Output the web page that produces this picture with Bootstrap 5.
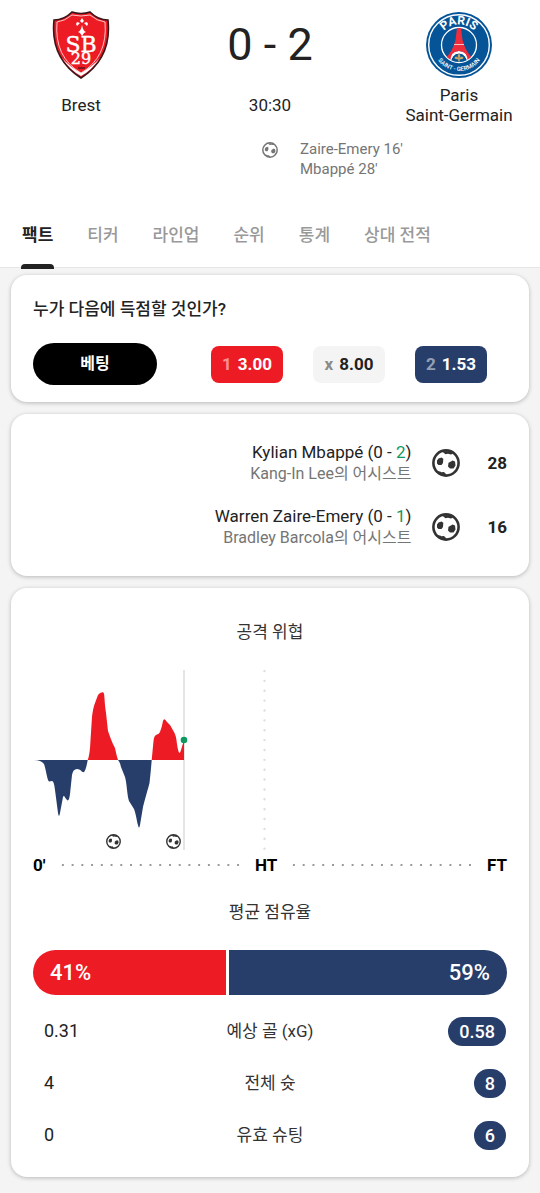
<!DOCTYPE html>
<html lang="ko">
<head>
<meta charset="utf-8">
<meta name="viewport" content="width=device-width, initial-scale=1">
<title>Brest 0 - 2 Paris Saint-Germain</title>
<link href="https://cdn.jsdelivr.net/npm/bootstrap@5.3.0/dist/css/bootstrap.min.css" rel="stylesheet">
<style>
  :root { --home: #ed1c24; --away: #273e6b; --ink: #222; --muted: #757575; --goal: #0f9960; }
  body { background: #f4f4f4; color: var(--ink); font-family: Roboto, "Noto Sans CJK KR", sans-serif; font-size: 17px; line-height: 20px; }
  .match-head { border-bottom: 1px solid #e6e6e6; padding-top: 11px; }
  .side { width: 30%; }
  .crest { height: 68px; }
  .team-name { height: 40px; margin-top: 6px; }
  .score { font-size: 45px; }
  .scorers { font-size: 15px; color: var(--muted); padding-top: 14px; }
  .scorer-icon { width: 16px; height: 20px; margin-right: -8px; }
  .scorer-names { padding-left: 30px; }
  .tabs { padding: 39px 22px 0; gap: 34px; }
  .tabs .nav-link { padding: 5px 0 0; height: 49px; line-height: 24px; color: #999; font-weight: 500; position: relative; }
  .tabs .nav-link.active { color: var(--ink); font-weight: 700; }
  .tabs .nav-link.active::after { content: ""; position: absolute; left: -1px; right: -1px; bottom: -2px; height: 5px; background: var(--ink); border-radius: 4px 4px 0 0; }
  .panels { padding: 7px 11px 16px; gap: 12px; }
  .panel { border: 0; border-radius: 16px; box-shadow: 0 1px 4px rgba(0,0,0,.25); padding: 22px 22px 17px; }
  .question { font-weight: 500; line-height: 24px; margin-bottom: 22px; }
  .bet { background: #000; color: #fff; font-size: 16px; font-weight: 700; width: 124px; height: 42px; padding: 0; --bs-btn-hover-bg: #222; --bs-btn-hover-color: #fff; }
  .odds { gap: 30px; padding-right: 20px; }
  .odd { width: 72px; height: 37px; padding: 0; border: 0; border-radius: 8px; font-weight: 700; color: #fff; gap: 6px; }
  .odd span { opacity: .5; }
  .home-fill { background: var(--home); }
  .draw-fill { background: #f4f4f4; color: var(--ink); }
  .away-fill { background: var(--away); }
  .events { padding: 27px 22px; gap: 20px; }
  .event-text { line-height: 22px; }
  .event-text em { color: var(--goal); font-style: normal; }
  .assist { color: var(--muted); font-size: 16px; }
  .event-icon { margin: 0 27px 0 21px; color: #333; }
  .minute { font-weight: 700; }
  .stats-panel { padding: 32px 22px 16px; }
  .heading { font-size: 17px; font-weight: 400; line-height: 24px; margin: 0; color: #333; }
  .chart { margin-top: 26px; color: #333; }
  .axis { color: #000; font-weight: 700; margin-top: 5px; gap: 12px; margin-bottom: 25px; }
  .dots { height: 4px; background: radial-gradient(circle, #999 1px, transparent 1px) 0 0 / 10px 4px; background-repeat: round no-repeat; }
  .bar { height: 45px; gap: 3px; margin-top: 26px; color: #fff; font-size: 22px; font-weight: 500; }
  .bar div { padding: 0 17px; }
  .stats { margin-top: 10px; width: 100%; font-size: 18px; table-layout: fixed; }
  .stats th { font-size: 17px; font-weight: 400; color: #333; text-align: center; height: 52px; }
  .stats td:first-child { padding-left: 11px; }
  .stats td:last-child { text-align: right; }
  .best { display: inline-block; background: var(--away); color: #fff; border-radius: 15px; padding: 0 11px; line-height: 29px; font-weight: 500; }
</style>
<script src="https://cdn.jsdelivr.net/npm/bootstrap@5.3.0/dist/js/bootstrap.bundle.min.js"></script>
</head>
<body>
<svg width="0" height="0" class="position-absolute" aria-hidden="true">
  <symbol id="ball" viewBox="0 0 28 28">
    <circle cx="14" cy="14" r="12.600" fill="none" stroke="currentColor" stroke-width="2.600"/>
    <path fill="currentColor" d="M9.500 2L20 2.500 21.500 4.500 19 5.400 16 4.800 13.500 5.200zM6.500 9.500L9.500 8.500 11.300 9.800 11 14 9.500 16 6.500 16 5 14.500 5 11.500zM18.500 12.800L20.500 11.500 23 12.500 23.500 16.500 21.500 19.500 18 19.500 16 17.500 16.500 13.800zM5 22L8 22.500 9.500 23.300 12 23 14.500 25.500 13 26.500 8 25.500z"/>
  </symbol>
</svg>

<header class="match-head bg-white">
  <div class="d-flex text-center">
    <div class="side">
      <svg class="crest" width="58" height="68" viewBox="0 0 58 68" role="img" aria-label="Brest">
        <path d="M20 1Q29 4 38 1Q46 9 56 9Q60 47 29 67Q-2 47 2 9Q12 9 20 1z" fill="#ed1c24" stroke="#3b1519" stroke-width="1.600"/>
        <path d="M20 4Q29 6 38 4Q45 10 53 11Q56 46 29 62Q2 46 5 11Q13 10 20 4z" fill="none" stroke="#fff" stroke-opacity=".75"/>
        <path d="M10 47Q18 56 29 62Q40 56 48 47Q39 60 29 65Q19 60 10 47z" fill="#fff"/>
        <path d="M30 7l2 3-2 2-2-2zM25 11l3 1-3 3-1-2zM35 11l1 2-1 2-3-3zM30 14Q31 20 34 21L32 22 30 25 28 22 26 21Q29 20 30 14z" fill="#fff"/>
        <text fill="#fff" stroke="#fff" stroke-width=".4" text-anchor="middle" font-family="DejaVu Serif, serif" font-size="22"><tspan x="29" y="41">SB</tspan><tspan x="29" y="53" font-size="16">29</tspan></text>
        <path d="M26 57h7" stroke="#5d1519" stroke-width="1.500"/>
      </svg>
      <div class="team-name d-flex align-items-center justify-content-center">Brest</div>
    </div>
    <div class="flex-fill">
      <div class="crest score d-flex align-items-center justify-content-center">0 - 2</div>
      <div class="team-name d-flex align-items-center justify-content-center">30:30</div>
    </div>
    <div class="side">
      <svg class="crest" width="68" height="68" viewBox="0 0 68 68" role="img" aria-label="Paris Saint-Germain">
        <defs>
          <path id="arc-top" d="M13.500 34A20.500 20.500 0 0 1 54.500 34"/>
          <path id="arc-bottom" d="M8 34A26 26 0 0 0 60 34"/>
          <clipPath id="inner"><circle cx="34" cy="34" r="17"/></clipPath>
        </defs>
        <circle cx="34" cy="34" r="33" fill="#045497"/>
        <circle cx="34" cy="34" r="30.300" fill="none" stroke="#fff" stroke-width="1.400"/>
        <circle cx="34" cy="34" r="17.500" fill="none" stroke="#fff" stroke-width="1.300"/>
        <g clip-path="url(#inner)">
          <path d="M22 53Q24 40 34 40Q44 40 46 53z" fill="#fff"/>
          <path d="M32 17h4L37.500 29Q40 40 49 49L43 53Q43 40 34 40Q25 40 25 53L19 49Q28 40 30.500 29z" fill="#ed2d3c"/>
          <path d="M29 33.500h10" fill="none" stroke="#fff" stroke-width=".7"/>
          <path d="M25.500 52A8.500 10 0 0 1 42.500 52z" fill="#045497" stroke="#fff" stroke-width="1"/>
        </g>
        <path d="M34 42l1.500 3-1 2q3-3 4 0l-1 1-3 .5 .5 2h-2l.5-2-3-.5-1-1q1-3 4 0l-1-2z" fill="#c6a667"/>
        <g fill="#fff" text-anchor="middle" font-family="Roboto, sans-serif">
          <text font-size="12" font-weight="700"><textPath href="#arc-top" startOffset="50%">PARIS</textPath></text>
          <text font-size="6" font-weight="500"><textPath href="#arc-bottom" startOffset="50%">SAINT - GERMAIN</textPath></text>
        </g>
      </svg>
      <div class="team-name d-flex align-items-center justify-content-center">Paris<br>Saint-Germain</div>
    </div>
  </div>
  <div class="scorers row g-0">
    <div class="col-6 text-end"><svg class="scorer-icon" role="img" aria-label="골"><use href="#ball"/></svg></div>
    <div class="col-6 scorer-names">Zaire-Emery 16'<br>Mbappé 28'</div>
  </div>
  <nav class="tabs nav flex-nowrap">
    <a class="nav-link active" aria-current="page" href="#">팩트</a>
    <a class="nav-link" href="#">티커</a>
    <a class="nav-link" href="#">라인업</a>
    <a class="nav-link" href="#">순위</a>
    <a class="nav-link" href="#">통계</a>
    <a class="nav-link" href="#">상대 전적</a>
  </nav>
</header>

<main class="panels d-flex flex-column">
  <section class="panel card">
    <div class="question">누가 다음에 득점할 것인가?</div>
    <div class="d-flex align-items-center justify-content-between">
      <button type="button" class="bet btn rounded-pill">베팅</button>
      <div class="odds d-flex">
        <button type="button" class="odd home-fill d-flex align-items-center justify-content-center"><span>1</span>3.00</button>
        <button type="button" class="odd draw-fill d-flex align-items-center justify-content-center"><span>x</span>8.00</button>
        <button type="button" class="odd away-fill d-flex align-items-center justify-content-center"><span>2</span>1.53</button>
      </div>
    </div>
  </section>

  <section class="panel card events">
    <div class="d-flex align-items-center justify-content-end">
      <div class="event-text text-end">Kylian Mbappé (0 - <em>2</em>)<div class="assist">Kang-In Lee의 어시스트</div></div>
      <svg class="event-icon" width="28" height="28" role="img" aria-label="골"><use href="#ball"/></svg>
      <div class="minute">28</div>
    </div>
    <div class="d-flex align-items-center justify-content-end">
      <div class="event-text text-end">Warren Zaire-Emery (0 - <em>1</em>)<div class="assist">Bradley Barcola의 어시스트</div></div>
      <svg class="event-icon" width="28" height="28" role="img" aria-label="골"><use href="#ball"/></svg>
      <div class="minute">16</div>
    </div>
  </section>

  <section class="panel card stats-panel">
    <h2 class="heading text-center">공격 위협</h2>
    <svg class="chart w-100" viewBox="0 0 474 180" role="img" aria-label="공격 위협">
      <path d="M151 0V180" stroke="#e5e5e5" stroke-width="2"/>
      <path d="M231.500 1V180" stroke="#dedede" stroke-width="2.400" stroke-linecap="round" stroke-dasharray="0 9.870"/>
      <g fill="#273e6b">
        <path d="M1 90Q8 90 11 94C13 99 14 110 16 111.500L19 111Q21 111 22 120L25 143Q26 149 27 143L30 127Q31 125 32 127.500L34 130Q36 132 37 124L39 105Q40 99 44 99C48 99 49 103 51 102Q53 100 54.700 90z"/>
        <path d="M85 90Q87 92 88 97L92 107C94 114 94 125 96 131L101 139C103 144 104 152 105 155Q106 160 107 155L110 137C112 129 115 119 116.500 113Q118 100 118.700 90z"/>
      </g>
      <g fill="#ed1c24">
        <path d="M54.700 90Q57 84 57.500 70L59 47Q60 38 62 33L65 25Q67 22 70 22.300C72 23 71 30 73 43L75 61Q77 67 79.500 73L82 78C83 83 84 87 85 90z"/>
        <path d="M118.700 90L120.500 71Q121 66 123 65L126 63.500Q128 61 130 51Q131 47 134 52L137 55L141 62Q143 65 144 74Q146 88 148 80L151 70V90z"/>
      </g>
      <circle cx="151" cy="70" r="3.300" fill="#0f9960"/>
      <use href="#ball" x="73" y="164" width="15" height="15"/>
      <use href="#ball" x="133" y="164" width="15" height="15"/>
    </svg>
    <div class="axis d-flex align-items-center">
      <span>0'</span><span class="dots flex-fill"></span><span>HT</span><span class="dots flex-fill"></span><span>FT</span>
    </div>
    <h2 class="heading text-center">평균 점유율</h2>
    <div class="bar d-flex rounded-pill overflow-hidden">
      <div class="home-fill d-flex align-items-center" style="width:41%">41%</div>
      <div class="away-fill d-flex align-items-center justify-content-end" style="width:59%">59%</div>
    </div>
    <table class="stats">
      <tbody>
        <tr><td>0.31</td><th scope="row">예상 골 (xG)</th><td><span class="best">0.58</span></td></tr>
        <tr><td>4</td><th scope="row">전체 슛</th><td><span class="best">8</span></td></tr>
        <tr><td>0</td><th scope="row">유효 슈팅</th><td><span class="best">6</span></td></tr>
      </tbody>
    </table>
  </section>
</main>
</body>
</html>
